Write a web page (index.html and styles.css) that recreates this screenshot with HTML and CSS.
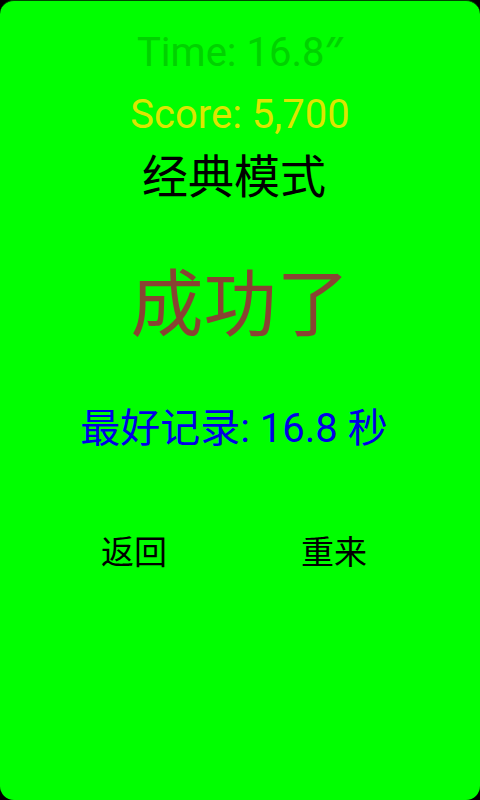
FILE: index.html
```html
<!DOCTYPE html>
<html lang="zh-CN">
<head>
<meta charset="utf-8">
<meta name="viewport" content="width=device-width, initial-scale=1">
<title>经典模式</title>
<link rel="stylesheet" href="styles.css">
</head>
<body>
<main class="screen">
<p class="stat time">Time: 16.8<span class="seconds">″</span></p>
<p class="stat score">Score: 5,700</p>
<h1 class="mode">经典模式</h1>
<p class="result">成功了</p>
<p class="stat best">最好记录: 16.8 秒</p>
<div class="actions">
<button type="button" class="action">返回</button>
<button type="button" class="action">重来</button>
</div>
</main>
</body>
</html>
```
FILE: styles.css
```css
* {
  box-sizing: border-box;
  margin: 0;
}

body {
  background: #000;
  font-family: Roboto, "Noto Sans CJK SC", sans-serif;
}

.screen {
  min-height: 100vh;
  padding: 22px 40px;
  border-top: 1px solid #040;
  border-radius: 14px;
  background: #0f0;
  text-align: center;
}

.stat {
  font-size: 40px;
  line-height: 56px;
}

.time {
  color: #00d200;
}

.seconds {
  font-family: "Open Sans", sans-serif;
  font-weight: 600;
}

.score {
  margin-top: 6px;
  color: #dce600;
}

.mode {
  margin: 6px 12px 0 0;
  font-size: 46px;
  font-weight: 400;
  line-height: 56px;
}

.result {
  margin-top: 56px;
  color: #884433;
  font-size: 73px;
  font-weight: 400;
  line-height: 88px;
}

.best {
  margin: 52px 12px 0 0;
  color: #0000e6;
}

.actions {
  display: grid;
  grid-template-columns: 1fr 1fr;
  margin: 72px 12px 0 0;
  column-gap: 12px;
}

.action {
  padding: 0;
  border: 0;
  background: none;
  color: #000;
  font: inherit;
  font-size: 33px;
  line-height: 48px;
}
```
